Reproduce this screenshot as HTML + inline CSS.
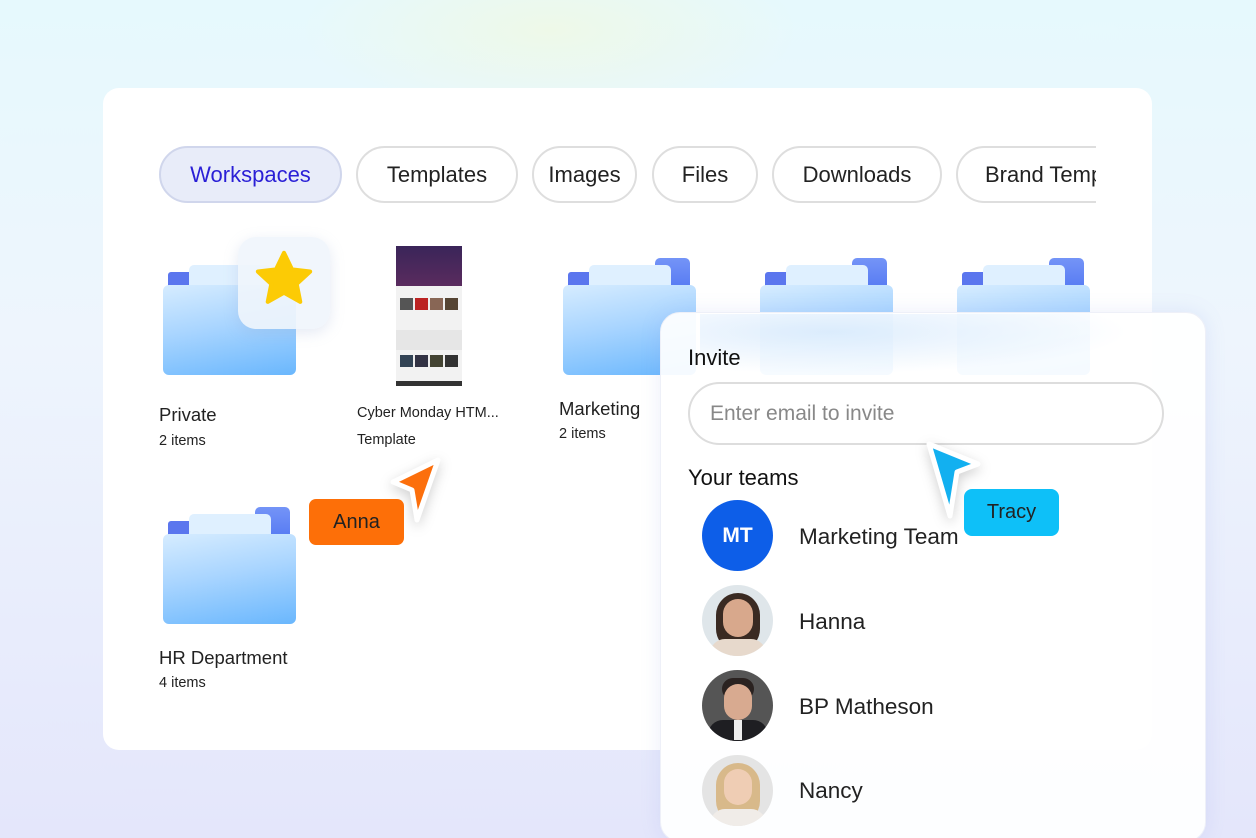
<!DOCTYPE html>
<html><head><meta charset="utf-8"><style>
*{margin:0;padding:0;box-sizing:border-box}
html,body{width:1256px;height:838px;overflow:hidden}
body{position:relative;font-family:"Liberation Sans",sans-serif;
background:linear-gradient(180deg,#e6f9fd 0%,#eef5fd 40%,#e4e6fb 100%);}
.glow{position:absolute;left:300px;top:-60px;width:500px;height:180px;border-radius:50%;background:radial-gradient(#eef9e8,rgba(238,249,232,0) 70%)}
.card{position:absolute;left:103px;top:88px;width:1049px;height:662px;background:#fff;border-radius:16px}
.tabs{position:absolute;left:159px;top:145px;width:937px;height:60px;overflow:hidden}
.tab{position:absolute;top:1px;height:57px;border:2px solid #dedede;border-radius:29px;font-size:22px;color:#222;display:flex;align-items:center;justify-content:center;white-space:nowrap}
.folder{position:absolute;width:133px;height:117px}
.folder .lt{position:absolute;left:5px;top:14px;width:26px;height:22px;background:#5b76ee;border-radius:3px}
.folder .rt{position:absolute;left:92px;top:0;width:35px;height:55px;background:linear-gradient(#7494f7,#3f66ef);border-radius:5px}
.folder .pp{position:absolute;left:26px;top:7px;width:82px;height:60px;background:#dff0ff;border-radius:5px}
.folder .fr{position:absolute;left:0;top:27px;width:133px;height:90px;border-radius:6px;background:linear-gradient(170deg,#d6ecff 0%,#a9d5ff 45%,#6ab7fd 100%)}
.lbl{position:absolute;font-size:18.5px;color:#222}
.sub{position:absolute;font-size:14.5px;color:#222}
.panel{position:absolute;left:660px;top:312px;width:546px;height:530px;background:rgba(255,255,255,.93);border-radius:20px;box-shadow:0 0 20px rgba(120,140,220,.15);border:1px solid #eef0f8}
.name{position:absolute;left:799px;font-size:22.5px;color:#222}
.av{position:absolute;left:702px;width:71px;height:71px;border-radius:50%;overflow:hidden}
</style></head><body>
<div class="glow"></div>
<div class="card"></div>
<div class="tabs">
<div class="tab" style="left:0;width:183px;background:#e8ecf9;color:#2a1fd6;border-color:#d0d6ec">Workspaces</div>
<div class="tab" style="left:197px;width:162px">Templates</div>
<div class="tab" style="left:373px;width:105px">Images</div>
<div class="tab" style="left:493px;width:106px">Files</div>
<div class="tab" style="left:613px;width:170px">Downloads</div>
<div class="tab" style="left:797px;width:190px;justify-content:flex-start;padding-left:27px">Brand Templates</div>
</div>

<div class="folder" style="left:163px;top:258px"><div class="lt"></div><div class="pp"></div><div class="fr"></div></div>
<div style="position:absolute;left:238px;top:237px;width:92px;height:92px;border-radius:18px;background:rgba(240,245,252,.9);box-shadow:0 4px 14px rgba(150,170,210,.25)"></div>
<svg style="position:absolute;left:251px;top:246px" width="66" height="66" viewBox="0 0 24 24"><path d="M12 2.5l2.9 6 6.6.8-4.9 4.5 1.3 6.5L12 17l-5.9 3.3 1.3-6.5L2.5 9.3l6.6-.8z" fill="#fccb05" stroke="#fccb05" stroke-width="1.5" stroke-linejoin="round"/></svg>
<div class="lbl" style="left:159px;top:404px">Private</div>
<div class="sub" style="left:159px;top:433px">2 items</div>

<div style="position:absolute;left:396px;top:246px;width:66px;height:140px;background:#f2f2f2">
<div style="height:40px;background:linear-gradient(#3a2559,#5a2b5e)"></div>
<div style="margin:12px 4px 0;height:12px;background:linear-gradient(90deg,#555 0 22%,#eee 22% 26%,#b22 26% 48%,#eee 48% 52%,#865 52% 74%,#eee 74% 78%,#543 78%)"></div>
<div style="margin:20px 0 0;height:20px;background:#e6e6e6"></div>
<div style="margin:5px 4px 0;height:12px;background:linear-gradient(90deg,#345 0 22%,#eee 22% 26%,#334 26% 48%,#eee 48% 52%,#443 52% 74%,#eee 74% 78%,#333 78%)"></div>
<div style="position:absolute;bottom:0;width:100%;height:5px;background:#333"></div>
</div>
<div class="sub" style="left:357px;top:405px">Cyber Monday HTM...</div>
<div class="sub" style="left:357px;top:432px">Template</div>

<div class="folder" style="left:563px;top:258px"><div class="lt"></div><div class="rt"></div><div class="pp"></div><div class="fr"></div></div>
<div class="lbl" style="left:559px;top:398px">Marketing</div>
<div class="sub" style="left:559px;top:426px">2 items</div>
<div class="folder" style="left:760px;top:258px"><div class="lt"></div><div class="rt"></div><div class="pp"></div><div class="fr"></div></div>
<div class="folder" style="left:957px;top:258px"><div class="lt"></div><div class="rt"></div><div class="pp"></div><div class="fr"></div></div>

<div class="folder" style="left:163px;top:507px"><div class="lt"></div><div class="rt"></div><div class="pp"></div><div class="fr"></div></div>
<div class="lbl" style="left:159px;top:647px">HR Department</div>
<div class="sub" style="left:159px;top:675px">4 items</div>

<svg style="position:absolute;left:385px;top:450px;filter:drop-shadow(0 4px 6px rgba(0,0,0,.18))" width="65" height="80" viewBox="0 0 65 80"><path d="M53 10 L8 32 L27 40 L32 70 Z" fill="#fc6f0c" stroke="#fff" stroke-width="5" stroke-linejoin="round"/></svg>
<div style="position:absolute;left:309px;top:499px;width:95px;height:46px;background:#fd6f08;border-radius:7px;color:#222;font-size:20px;display:flex;align-items:center;justify-content:center">Anna</div>

<div class="panel"></div>
<div style="position:absolute;left:700px;top:314px;width:430px;height:60px;background:radial-gradient(ellipse at 30% 30%,rgba(190,220,250,.5),rgba(255,255,255,0) 70%)"></div>
<div style="position:absolute;left:688px;top:345px;font-size:22px;color:#111">Invite</div>
<div style="position:absolute;left:688px;top:382px;width:476px;height:63px;border:2px solid #ddd;border-radius:32px;background:#fff;font-size:21px;color:#888;padding-left:20px;line-height:59px">Enter email to invite</div>
<div style="position:absolute;left:688px;top:465px;font-size:22px;color:#111">Your teams</div>
<svg style="position:absolute;left:920px;top:436px;filter:drop-shadow(0 4px 6px rgba(0,0,0,.18))" width="65" height="95" viewBox="0 0 65 95"><path d="M9 8 L58 28 L37 36 L30 80 Z" fill="#12b0f0" stroke="#fff" stroke-width="5" stroke-linejoin="round"/></svg>
<div style="position:absolute;left:964px;top:489px;width:95px;height:47px;background:#0ec0f8;border-radius:8px;color:#222;font-size:20px;display:flex;align-items:center;justify-content:center">Tracy</div>

<div class="av" style="top:500px;background:#0d5ee8;color:#fff;font-weight:bold;font-size:21px;display:flex;align-items:center;justify-content:center">MT</div>
<div class="name" style="top:524px">Marketing Team</div>
<div class="av" style="top:585px;background:#dfe6ea"><div style="position:absolute;left:14px;top:8px;width:44px;height:58px;border-radius:22px;background:#3a2a22"></div><div style="position:absolute;left:21px;top:14px;width:30px;height:38px;border-radius:15px;background:#d8a88c"></div><div style="position:absolute;left:8px;top:54px;width:56px;height:30px;border-radius:20px;background:#e7d9cc"></div></div>
<div class="name" style="top:609px">Hanna</div>
<div class="av" style="top:670px;background:#555"><div style="position:absolute;left:20px;top:8px;width:32px;height:22px;border-radius:14px;background:#2a2220"></div><div style="position:absolute;left:22px;top:14px;width:28px;height:36px;border-radius:14px;background:#d8aa90"></div><div style="position:absolute;left:6px;top:50px;width:60px;height:30px;border-radius:20px;background:#1e1e22"></div><div style="position:absolute;left:32px;top:50px;width:8px;height:20px;background:#eee"></div></div>
<div class="name" style="top:694px">BP Matheson</div>
<div class="av" style="top:755px;background:#e4e4e4"><div style="position:absolute;left:14px;top:8px;width:44px;height:60px;border-radius:22px;background:#d8b98a"></div><div style="position:absolute;left:22px;top:14px;width:28px;height:36px;border-radius:14px;background:#efcdb4"></div><div style="position:absolute;left:8px;top:54px;width:56px;height:30px;border-radius:20px;background:#f0ece8"></div></div>
<div class="name" style="top:778px">Nancy</div>
</body></html>
